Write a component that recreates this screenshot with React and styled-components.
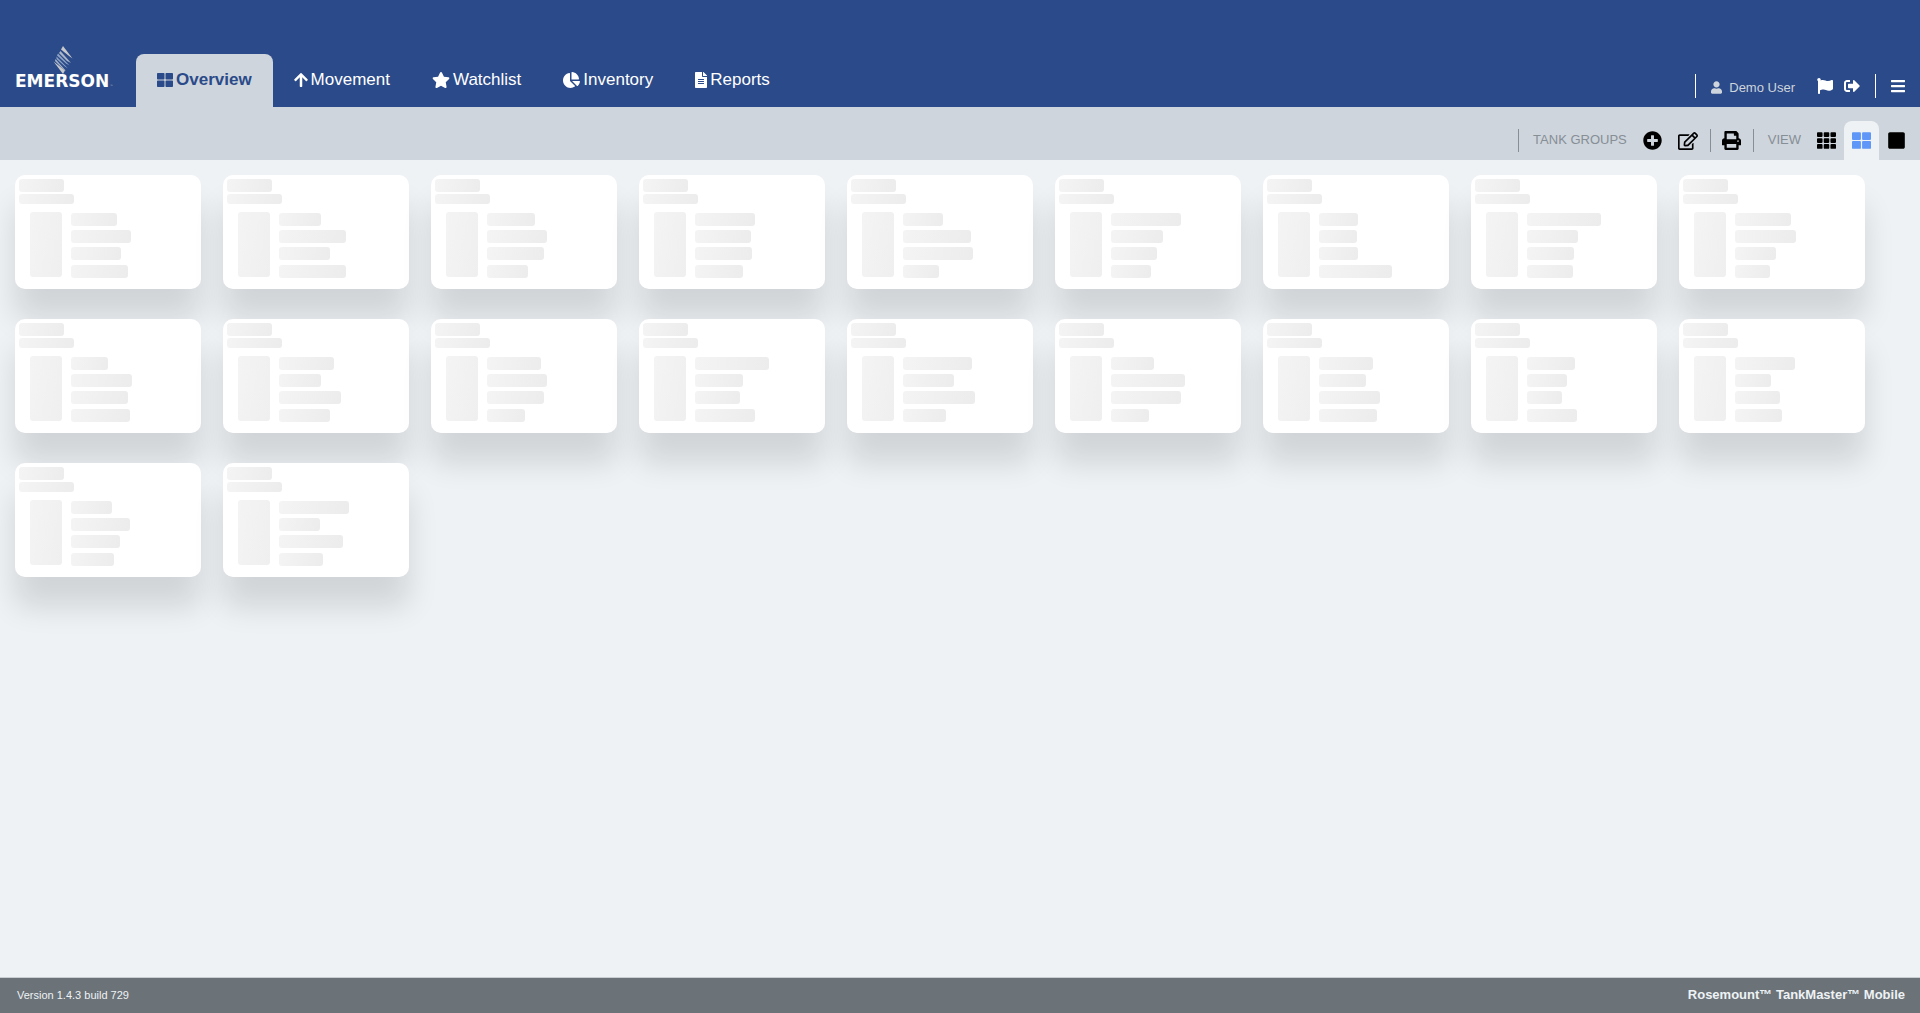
import React from "react";
import styled, { createGlobalStyle, css } from "styled-components";
import {
  FaThLarge, FaArrowUp, FaStar, FaChartPie, FaFileAlt, FaUser, FaFlag,
  FaSignOutAlt, FaBars, FaPlusCircle, FaRegEdit, FaPrint, FaTh, FaSquare,
} from "react-icons/fa";

const Global = createGlobalStyle`
  *, *::before, *::after { box-sizing: border-box; }
  body {
    margin: 0;
    background: #eef2f5;
    font-family: "Liberation Sans", Arial, sans-serif;
  }
  button { font: inherit; border: 0; margin: 0; padding: 0; background: none; cursor: pointer; }
`;

const Page = styled.div`
  min-height: 100vh;
  display: flex;
  flex-direction: column;
`;

const Glyph = styled.span`
  display: block;
  flex: none;
  width: ${(p) => p.$w}px;
  height: ${(p) => p.$h}px;
  svg { display: block; width: 100%; height: 100%; }
`;

const Header = styled.header`
  height: 107px;
  display: flex;
  align-items: flex-end;
  background: #2b4a89;
  color: #fff;
`;

const Logo = styled.a`
  width: 136px;
  height: 64px;
  padding-left: 15px;
  svg { display: block; }
`;

const LogoText = styled.text`
  font-family: "DejaVu Sans", sans-serif;
  font-weight: 700;
  font-size: ${(p) => p.$size}px;
  fill: ${(p) => p.$color};
`;

const Nav = styled.nav`
  display: flex;
  flex: 1;
`;

const Tab = styled.a`
  height: 53px;
  padding: 0 21px 2px;
  display: flex;
  align-items: center;
  gap: 3px;
  border-radius: 8px 8px 0 0;
  font-size: 17px;
  color: #fff;
  text-decoration: none;
  ${(p) => p.$active && css`
    background: #ced5dc;
    color: #2b4a89;
    font-weight: 700;
  `}
`;

const UserArea = styled.div`
  height: 33px;
  display: flex;
  align-items: flex-start;
`;

const UserGroup = styled.div`
  height: 24px;
  display: flex;
  align-items: center;
  border-left: 1px solid #fff;
  padding: 0 15px;
`;

const UserName = styled.span`
  display: flex;
  align-items: center;
  gap: 7px;
  padding-top: 2px;
  font-size: 13px;
  color: #ced5dc;
  margin-right: 22px;
`;

const HeaderButton = styled.button`
  display: flex;
  color: #fff;
  & + & { margin-left: 11px; }
`;

const Toolbar = styled.div`
  height: 53px;
  padding-right: 6px;
  display: flex;
  justify-content: flex-end;
  align-items: flex-end;
  background: #ced5dc;
`;

const ToolGroup = styled.div`
  height: 23px;
  margin-bottom: 8px;
  padding: 0 ${(p) => (p.$tight ? 8 : 12)}px 0 11px;
  display: flex;
  align-items: center;
  gap: 16px;
  border-left: 1px solid #868e96;
`;

const ToolLabel = styled.span`
  font-size: 13px;
  line-height: 20px;
  padding: 0 0 1px 3px;
  color: #868e96;
`;

const ToolButton = styled.button`
  display: flex;
  color: #000;
`;

const ViewSwitch = styled.div`
  display: flex;
`;

const ViewButton = styled.button`
  width: 35px;
  height: 39px;
  display: flex;
  justify-content: center;
  align-items: center;
  border-radius: 8px 8px 0 0;
  color: ${(p) => (p.$active ? "#5e97f8" : "#000")};
  background: ${(p) => (p.$active ? "#eef2f5" : "transparent")};
`;

const Main = styled.main`
  flex: 1;
  padding: 15px;
  display: grid;
  grid-template-columns: repeat(auto-fill, 186px);
  grid-auto-rows: 114px;
  gap: 30px 22px;
`;

const Card = styled.article`
  padding: 4px;
  border-radius: 10px;
  background: #fff;
  box-shadow: 0 30px 30px rgba(0, 0, 0, 0.12);
`;

const Bone = styled.div`
  width: ${(p) => p.$w}px;
  height: ${(p) => p.$h}px;
  border-radius: 3px;
  background: linear-gradient(100deg, #f4f4f4, #ececec);
`;

const Heading = styled.div`
  display: grid;
  gap: 2px;
`;

const CardBody = styled.div`
  display: flex;
  gap: 9px;
  padding: 8px 0 0 11px;
`;

const Values = styled.div`
  height: 66px;
  padding-top: 1px;
  display: flex;
  flex-direction: column;
  gap: 4px;
  & > :last-child { margin-top: auto; }
`;

const Tank = styled(Bone)`
  background: linear-gradient(100deg, #f4f4f4, #efefef);
`;

const Footer = styled.footer`
  height: 36px;
  padding: 0 15px 2px 17px;
  display: flex;
  justify-content: space-between;
  align-items: center;
  border-top: 1px solid #c9ced2;
  background: #6b7278;
  color: #eef2f5;
  font-size: 11px;
`;

const Product = styled.strong`
  font-size: 13px;
`;

const tabs = [
  ["Overview", FaThLarge, 16],
  ["Movement", FaArrowUp, 14],
  ["Watchlist", FaStar, 18],
  ["Inventory", FaChartPie, 17],
  ["Reports", FaFileAlt, 12],
];

const tanks = [
  [46, 60, 50, 57], [42, 67, 51, 67], [48, 60, 57, 41], [60, 56, 57, 48], [40, 68, 70, 36],
  [70, 52, 46, 40], [39, 38, 39, 73], [74, 51, 47, 46], [56, 61, 41, 35],
  [37, 61, 57, 59], [55, 42, 62, 51], [54, 60, 57, 38], [74, 48, 45, 60], [69, 51, 72, 43],
  [43, 74, 70, 38], [54, 47, 61, 58], [48, 40, 35, 50], [60, 36, 45, 47],
  [41, 59, 49, 43], [70, 41, 64, 44],
];

function EmersonLogo() {
  return (
    <svg width="102" height="50" viewBox="0 0 102 50" role="img" aria-label="Emerson">
      <path fill="#c6c8cb" d="M48 3 L57.5 15.5 L54 13 L46 6.5Z" />
      <path fill="#a9b4c6" d="M45.5 8 L56 20 L52 18 L44 10Z" />
      <path fill="#8fa3c4" d="M43 10.5 L54.5 22.5 L51 20.5 L42 12.5Z" />
      <path fill="#8fa3c4" d="M41.5 13.5 L53 25.5 L50 23.5 L41.5 16Z" />
      <path fill="#a9b4c6" d="M40.5 16 L51 28 L48.5 26.5 L40 18Z" />
      <path fill="#c6c8cb" d="M38.5 18.5 L50 27.5 L48 31Z" />
      <LogoText $size={17} $color="#fff" x="0" y="44">EMERSON</LogoText>
      <LogoText $size={3} $color="#a9b4c6" x="95" y="44">™</LogoText>
    </svg>
  );
}

function TankCard({ values }) {
  return (
    <Card>
      <Heading>
        <Bone $w={45} $h={13} />
        <Bone $w={55} $h={10} />
      </Heading>
      <CardBody>
        <Tank $w={32} $h={65} />
        <Values>
          {values.map((w, i) => <Bone key={i} $w={w} $h={13} />)}
        </Values>
      </CardBody>
    </Card>
  );
}

export default function App() {
  return (
    <Page>
      <Global />
      <Header>
        <Logo href="#"><EmersonLogo /></Logo>
        <Nav>
          {tabs.map(([name, Icon, width], i) => (
            <Tab key={name} href="#" $active={i === 0}>
              <Glyph $w={width} $h={16}><Icon /></Glyph>
              {name}
            </Tab>
          ))}
        </Nav>
        <UserArea>
          <UserGroup>
            <UserName><Glyph $w={11} $h={13}><FaUser /></Glyph>Demo User</UserName>
            <HeaderButton aria-label="Alarms"><Glyph $w={16} $h={16}><FaFlag /></Glyph></HeaderButton>
            <HeaderButton aria-label="Sign out"><Glyph $w={16} $h={16}><FaSignOutAlt /></Glyph></HeaderButton>
          </UserGroup>
          <UserGroup>
            <HeaderButton aria-label="Menu"><Glyph $w={14} $h={16}><FaBars /></Glyph></HeaderButton>
          </UserGroup>
        </UserArea>
      </Header>
      <Toolbar>
        <ToolGroup>
          <ToolLabel>TANK GROUPS</ToolLabel>
          <ToolButton aria-label="Add group"><Glyph $w={19} $h={19}><FaPlusCircle /></Glyph></ToolButton>
          <ToolButton aria-label="Edit group"><Glyph $w={20} $h={18}><FaRegEdit /></Glyph></ToolButton>
        </ToolGroup>
        <ToolGroup>
          <ToolButton aria-label="Print"><Glyph $w={19} $h={19}><FaPrint /></Glyph></ToolButton>
        </ToolGroup>
        <ToolGroup $tight>
          <ToolLabel>VIEW</ToolLabel>
        </ToolGroup>
        <ViewSwitch>
          <ViewButton aria-label="Small tiles"><Glyph $w={19} $h={19}><FaTh /></Glyph></ViewButton>
          <ViewButton aria-label="Medium tiles" $active><Glyph $w={19} $h={19}><FaThLarge /></Glyph></ViewButton>
          <ViewButton aria-label="Large tiles"><Glyph $w={17} $h={19}><FaSquare /></Glyph></ViewButton>
        </ViewSwitch>
      </Toolbar>
      <Main>
        {tanks.map((values, i) => <TankCard key={i} values={values} />)}
      </Main>
      <Footer>
        <span>Version 1.4.3 build 729</span>
        <Product>Rosemount™ TankMaster™ Mobile</Product>
      </Footer>
    </Page>
  );
}
